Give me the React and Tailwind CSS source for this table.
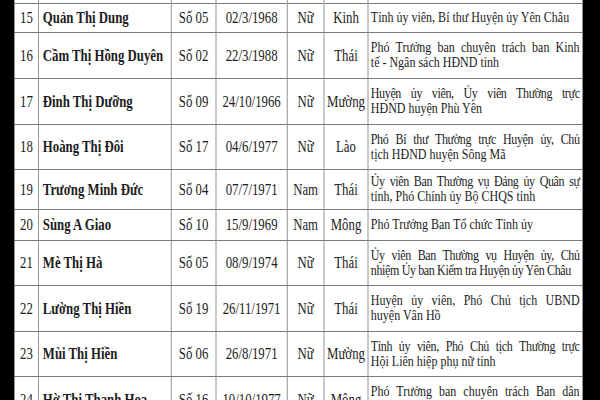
import React from 'react';

const rows = [
  { stt: 15, name: 'Quản Thị Dung', so: 'Số 05', dob: '02/3/1968', sex: 'Nữ', eth: 'Kinh', pos: ['Tỉnh ủy viên, Bí thư Huyện ủy Yên Châu'], h: 'h-[29px]' },
  { stt: 16, name: 'Cầm Thị Hồng Duyên', so: 'Số 02', dob: '22/3/1988', sex: 'Nữ', eth: 'Thái', pos: ['Phó Trưởng ban chuyên trách ban Kinh', 'tế - Ngân sách HĐND tỉnh'], h: 'h-[46px]' },
  { stt: 17, name: 'Đinh Thị Dưỡng', so: 'Số 09', dob: '24/10/1966', sex: 'Nữ', eth: 'Mường', pos: ['Huyện ủy viên, Ủy viên Thường trực', 'HĐND huyện Phù Yên'], tight: [0], h: 'h-[46px]' },
  { stt: 18, name: 'Hoàng Thị Đôi', so: 'Số 17', dob: '04/6/1977', sex: 'Nữ', eth: 'Lào', pos: ['Phó Bí thư Thường trực Huyện ủy, Chủ', 'tịch HĐND huyện Sông Mã'], tight: [0], h: 'h-[45px]' },
  { stt: 19, name: 'Trương Minh Đức', so: 'Số 04', dob: '07/7/1971', sex: 'Nam', eth: 'Thái', pos: ['Ủy viên Ban Thường vụ Đảng ủy Quân sự', 'tỉnh, Phó Chính ủy Bộ CHQS tỉnh'], tight: [0], h: 'h-[40px]' },
  { stt: 20, name: 'Sùng A Giao', so: 'Số 10', dob: '15/9/1969', sex: 'Nam', eth: 'Mông', pos: ['Phó Trưởng Ban Tổ chức Tỉnh ủy'], h: 'h-[31px]' },
  { stt: 21, name: 'Mè Thị Hà', so: 'Số 05', dob: '08/9/1974', sex: 'Nữ', eth: 'Thái', pos: ['Ủy viên Ban Thường vụ Huyện ủy, Chủ', 'nhiệm Ủy ban Kiểm tra Huyện ủy Yên Châu'], tight: [0, 1], h: 'h-[45px]' },
  { stt: 22, name: 'Lường Thị Hiền', so: 'Số 19', dob: '26/11/1971', sex: 'Nữ', eth: 'Thái', pos: ['Huyện ủy viên, Phó Chủ tịch UBND', 'huyện Vân Hồ'], h: 'h-[46px]' },
  { stt: 23, name: 'Mùi Thị Hiền', so: 'Số 06', dob: '26/8/1971', sex: 'Nữ', eth: 'Mường', pos: ['Tỉnh ủy viên, Phó Chủ tịch Thường trực', 'Hội Liên hiệp phụ nữ tỉnh'], tight: [0], h: 'h-[45px]' },
  { stt: 24, name: 'Hờ Thị Thanh Hoa', so: 'Số 16', dob: '10/10/1977', sex: 'Nữ', eth: 'Mông', pos: ['Phó Trưởng ban chuyên trách Ban dân', 'tộc HĐND tỉnh'], h: 'h-[46px]' },
];

const cell = 'border border-[#7a7a7a] align-middle';

const App = () => {
  return (
    <div className="flex h-[400px] w-[600px] overflow-hidden bg-black font-['Liberation_Serif','Times_New_Roman',serif] text-[#1c1c1c]">
      <div className="w-[14px] shrink-0" />
      <div className="w-[569px] shrink-0 overflow-hidden bg-white">
        <table className="w-[710px] origin-top-left scale-x-[0.8] table-fixed border-collapse text-[16px] leading-[15px]">
          <colgroup>
            <col className="w-[30px]" />
            <col className="w-[166px]" />
            <col className="w-[56px]" />
            <col className="w-[89px]" />
            <col className="w-[46px]" />
            <col className="w-[55px]" />
            <col className="w-[268px]" />
          </colgroup>
          <tbody>
            <tr className="h-[3px]">
              {[0, 1, 2, 3, 4, 5, 6].map((i) => (
                <td key={i} className="border-x border-[#7a7a7a] p-0" />
              ))}
            </tr>
            {rows.map((r) => (
              <tr key={r.stt} className={r.h}>
                <td className={`${cell} p-0 text-center`}>{r.stt}</td>
                <td className={`${cell} px-[5px] py-0 font-bold whitespace-nowrap`}>{r.name}</td>
                <td className={`${cell} p-0 text-center whitespace-nowrap`}>{r.so}</td>
                <td className={`${cell} p-0 text-center whitespace-nowrap`}>{r.dob}</td>
                <td className={`${cell} p-0 text-center`}>{r.sex}</td>
                <td className={`${cell} p-0 text-center`}>{r.eth}</td>
                <td className={`${cell} px-[3px] py-0 text-[15px]`}>
                  {r.pos.map((line, i) => (
                    <div
                      key={i}
                      className={`whitespace-nowrap ${(r.tight || []).includes(i) ? 'tracking-[-0.45px]' : ''} ${i === 0 && r.pos.length > 1 ? 'text-justify [text-align-last:justify]' : ''}`}
                    >
                      {line}
                    </div>
                  ))}
                </td>
              </tr>
            ))}
          </tbody>
        </table>
      </div>
      <div className="flex-1" />
    </div>
  );
};

export default App;
